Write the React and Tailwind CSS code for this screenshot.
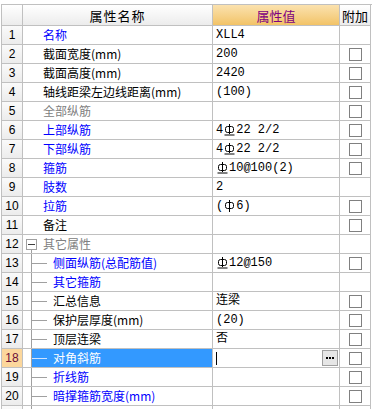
import React from "react";

const BLUE = "text-[#0000ff]";
const BLACK = "text-black";
const GRAY = "text-[#808080]";

function Bar({ under }) {
  return (
    <svg width="11" height="12" viewBox="0 0 11 12" className="inline-block align-[-1px] mx-[1px]">
      <rect x="1.5" y="2.5" width="8" height="6" rx="2" fill="none" stroke="black" strokeWidth="1" />
      <line x1="5.5" y1="0" x2="5.5" y2={under ? 10 : 12} stroke="black" strokeWidth="1" />
      {under && <line x1="0.5" y1="11" x2="10.5" y2="11" stroke="black" strokeWidth="1" />}
    </svg>
  );
}

const rows = [
  { n: 1, name: "名称", c: BLUE, val: ["XLL4"], cb: false },
  { n: 2, name: "截面宽度(mm)", c: BLACK, val: ["200"], cb: true },
  { n: 3, name: "截面高度(mm)", c: BLACK, val: ["2420"], cb: true },
  { n: 4, name: "轴线距梁左边线距离(mm)", c: BLACK, val: ["(100)"], cb: true },
  { n: 5, name: "全部纵筋", c: GRAY, val: [], cb: true },
  { n: 6, name: "上部纵筋", c: BLUE, val: ["4", "U", "22 2/2"], cb: true },
  { n: 7, name: "下部纵筋", c: BLUE, val: ["4", "U", "22 2/2"], cb: true },
  { n: 8, name: "箍筋", c: BLUE, val: ["U", "10@100(2)"], cb: true },
  { n: 9, name: "肢数", c: BLUE, val: ["2"], cb: false },
  { n: 10, name: "拉筋", c: BLUE, val: ["(", "P", "6)"], cb: true },
  { n: 11, name: "备注", c: BLACK, val: [], cb: true },
  { n: 12, name: "其它属性", c: GRAY, val: [], cb: false, group: true },
  { n: 13, name: "侧面纵筋(总配筋值)", c: BLUE, val: ["U", "12@150"], cb: true, child: true },
  { n: 14, name: "其它箍筋", c: BLUE, val: [], cb: false, child: true },
  { n: 15, name: "汇总信息", c: BLACK, val: ["连梁"], cb: true, child: true },
  { n: 16, name: "保护层厚度(mm)", c: BLACK, val: ["(20)"], cb: true, child: true },
  { n: 17, name: "顶层连梁", c: BLACK, val: ["否"], cb: true, child: true },
  { n: 18, name: "对角斜筋", c: "text-white", val: [], cb: true, child: true, sel: true },
  { n: 19, name: "折线筋", c: BLUE, val: [], cb: true, child: true },
  { n: 20, name: "暗撑箍筋宽度(mm)", c: BLUE, val: [], cb: true, child: true },
  { n: 21, name: "", c: BLACK, val: [], cb: false, child: true },
];

const cell = "border-r border-b border-[#c0c0c0] h-[19px]";

function NameCell({ r }) {
  if (r.child) {
    return (
      <div className={`${cell} flex items-stretch`}>
        <div className="w-[8px] shrink-0" />
        <div className="w-px shrink-0 bg-[#a0a0a0]" />
        <div className={`flex-1 flex items-center ${r.sel ? "bg-[#3399ff]" : ""}`}>
          {r.n <= 20 && <div className={`w-[15px] h-px ${r.sel ? "bg-[#cfe3ff]" : "bg-[#a0a0a0]"}`} />}
          <span className={`ml-[6px] ${r.c}`}>{r.name}</span>
        </div>
      </div>
    );
  }
  if (r.group) {
    return (
      <div className={`${cell} flex items-stretch`}>
        <div className="ml-[3px] w-[11px] flex flex-col items-center">
          <div className="flex-1" />
          <div className="w-[11px] h-[11px] border border-[#a0a0a0] bg-white flex items-center justify-center">
            <div className="w-[7px] h-px bg-[#404040]" />
          </div>
          <div className="flex-1 w-px bg-[#a0a0a0]" />
        </div>
        <span className={`ml-[6px] flex items-center ${r.c}`}>{r.name}</span>
      </div>
    );
  }
  return (
    <div className={`${cell} flex items-center`}>
      <span className={`ml-[20px] ${r.c}`}>{r.name}</span>
    </div>
  );
}

function ValueCell({ r }) {
  if (r.sel) {
    return (
      <div className={`${cell} flex items-center pl-[3px] pr-[1px]`}>
        <div className="w-px h-[13px] bg-black" />
        <div className="flex-1" />
        <div className="w-[16px] h-[16px] border border-[#a0a0a0] bg-[#e6e6e6] flex items-center justify-center gap-[1px]">
          <div className="w-[2px] h-[2px] bg-black" />
          <div className="w-[2px] h-[2px] bg-black" />
          <div className="w-[2px] h-[2px] bg-black" />
        </div>
      </div>
    );
  }
  return (
    <div className={`${cell} flex items-center pl-[3px] text-black whitespace-pre`} style={{ fontFamily: '"Liberation Mono", "Noto Sans CJK SC", monospace' }}>
      {r.val.map((p, i) =>
        p === "U" ? <Bar key={i} under /> : p === "P" ? <Bar key={i} /> : <span key={i}>{p}</span>
      )}
    </div>
  );
}

export default function App() {
  return (
    <div className="w-[379px] h-[409px] overflow-hidden bg-white text-[12px] leading-none" style={{ fontFamily: '"Noto Sans CJK SC", "Noto Sans", sans-serif' }}>
      <div className="ml-[1px] mt-[4px] w-[371px] border-l border-t border-[#c0c0c0] grid grid-cols-[21px_190px_127px_31px]">
        <div className="border-r border-b border-[#c0c0c0] h-[21px] bg-gradient-to-b from-[#ffffff] to-[#ececec]" />
        <div className="border-r border-b border-[#c0c0c0] h-[21px] bg-gradient-to-b from-[#ffffff] to-[#ececec] flex items-center justify-center text-[13px] tracking-[1px]">属性名称</div>
        <div className="border-r border-b border-[#c0c0c0] h-[21px] bg-gradient-to-b from-[#fbe2ae] to-[#f2c366] flex items-center justify-center text-[13px] text-[#800080]">属性值</div>
        <div className="border-r border-b border-[#c0c0c0] h-[21px] bg-gradient-to-b from-[#ffffff] to-[#ececec] flex items-center justify-center text-[13px]">附加</div>
        {rows.map((r) => (
          <React.Fragment key={r.n}>
            <div className={`${cell} flex items-center justify-center ${r.sel ? "bg-[#fcd79c] text-[#6b0f3a]" : "bg-gradient-to-b from-[#fafafa] to-[#ececec] text-black"}`} style={{ fontFamily: '"Liberation Sans", sans-serif' }}>
              {r.n <= 20 ? r.n : ""}
            </div>
            <NameCell r={r} />
            <ValueCell r={r} />
            <div className={`${cell} flex items-center justify-center`}>
              {r.cb && <div className="w-[13px] h-[13px] border border-[#808080] bg-white ml-[1px]" />}
            </div>
          </React.Fragment>
        ))}
      </div>
    </div>
  );
}
